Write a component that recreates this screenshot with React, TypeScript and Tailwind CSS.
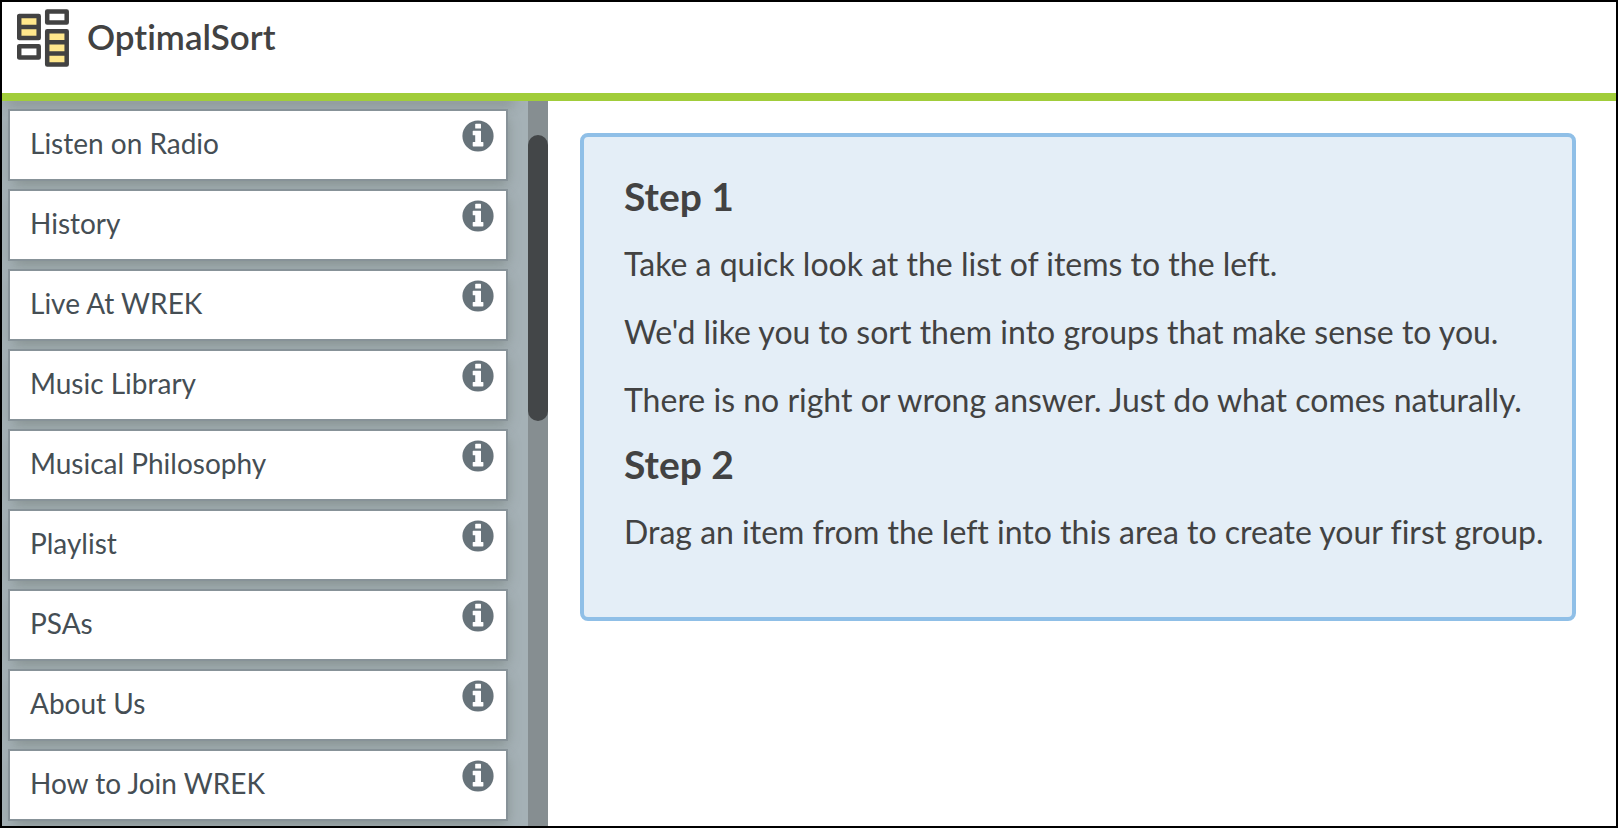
const cards = [
  'Listen on Radio',
  'History',
  'Live At WREK',
  'Music Library',
  'Musical Philosophy',
  'Playlist',
  'PSAs',
  'About Us',
  'How to Join WREK',
];

function Logo() {
  return (
    <svg width="52" height="58" viewBox="0 0 52 58" aria-hidden="true" className="shrink-0">
      <g stroke="#424242" strokeWidth="4.500" strokeLinejoin="round">
        <rect x="2.200" y="7" width="19.500" height="22" fill="#ffe78c" />
        <path d="M2.200 18h19.500" />
        <rect x="2.200" y="37.300" width="19.500" height="11.200" fill="#fff" />
        <rect x="30.200" y="2.400" width="19.500" height="11.200" fill="#fff" />
        <rect x="30.200" y="22.300" width="19.500" height="33.200" fill="#ffe78c" />
        <path d="M30.200 33.300h19.500M30.200 44.500h19.500" />
      </g>
    </svg>
  );
}

function InfoIcon() {
  return (
    <svg width="32" height="32" viewBox="0 0 32 32" aria-hidden="true">
      <circle cx="16" cy="16" r="15.600" fill="#67737a" />
      <g fill="#fff">
        <rect x="13.200" y="3.700" width="5.800" height="4.800" rx="0.600" />
        <path d="M11.300 10.700h7.100q.6 0 .6.600v10.700h1.800q.6 0 .6.600v3.200q0 .6-.6.600h-9.500q-.6 0-.6-.6v-3.200q0-.6.6-.6h1.900v-6.700h-1.900q-.6 0-.6-.6v-3.400q0-.6.6-.6z" />
      </g>
    </svg>
  );
}

function Card({ label }: { label: string }) {
  return (
    <li className="flex h-[72px] items-start justify-between border-2 border-[#879298] bg-white pt-[9px] pr-3 pl-5 shadow-[2px_6px_12px_-3px_rgba(90,100,92,0.45)]">
      <span className="pt-1 text-[28px] leading-[38px] text-[#454e54]">{label}</span>
      <button type="button" aria-label={`About ${label}`} className="flex">
        <InfoIcon />
      </button>
    </li>
  );
}

export default function App() {
  return (
    <div className="flex h-screen flex-col overflow-hidden border-2 border-black bg-white font-['Lato','Liberation_Sans',sans-serif] text-[#424242] [font-variant-ligatures:no-common-ligatures]">
      <header className="flex h-[99px] shrink-0 items-start gap-[18px] border-b-8 border-[#a1cd3a] pt-[7px] pl-[15px]">
        <Logo />
        <h1 className="pt-1 text-[35px] leading-[46px] font-semibold">OptimalSort</h1>
      </header>

      <div className="flex min-h-0 flex-1">
        <aside className="flex w-[34%] max-w-[546px] shrink-0 bg-[#a5b1b6]">
          <div className="min-w-0 flex-1 overflow-hidden pr-5 pl-[6px]">
            <div className="shadow-[2px_0_12px_4px_rgba(90,100,92,0.45)]" />
            <ul className="flex flex-col gap-2 pt-2">
              {cards.map((label) => (
                <Card key={label} label={label} />
              ))}
            </ul>
          </div>
          <div className="w-5 shrink-0 bg-[#868e91] pt-[34px]">
            <div className="h-[286px] rounded-full bg-[#434648]" />
          </div>
        </aside>

        <main className="min-w-0 flex-1 pt-8 pr-10 pl-8">
          <section className="rounded-lg border-4 border-[#8fbfe7] bg-[#e4eef7] pt-[37px] pr-6 pb-[67px] pl-10">
            <h2 className="text-[39px] leading-[44px] font-bold">Step 1</h2>
            <div className="flex flex-col gap-8 pt-7 text-[32px] leading-[36px]">
              <p>Take a quick look at the list of items to the left.</p>
              <p>We'd like you to sort them into groups that make sense to you.</p>
              <p>There is no right or wrong answer. Just do what comes naturally.</p>
            </div>
            <h2 className="pt-6 text-[39px] leading-[44px] font-bold">Step 2</h2>
            <p className="pt-7 text-[32px] leading-[36px]">
              Drag an item from the left into this area to create your first group.
            </p>
          </section>
        </main>
      </div>
    </div>
  );
}
